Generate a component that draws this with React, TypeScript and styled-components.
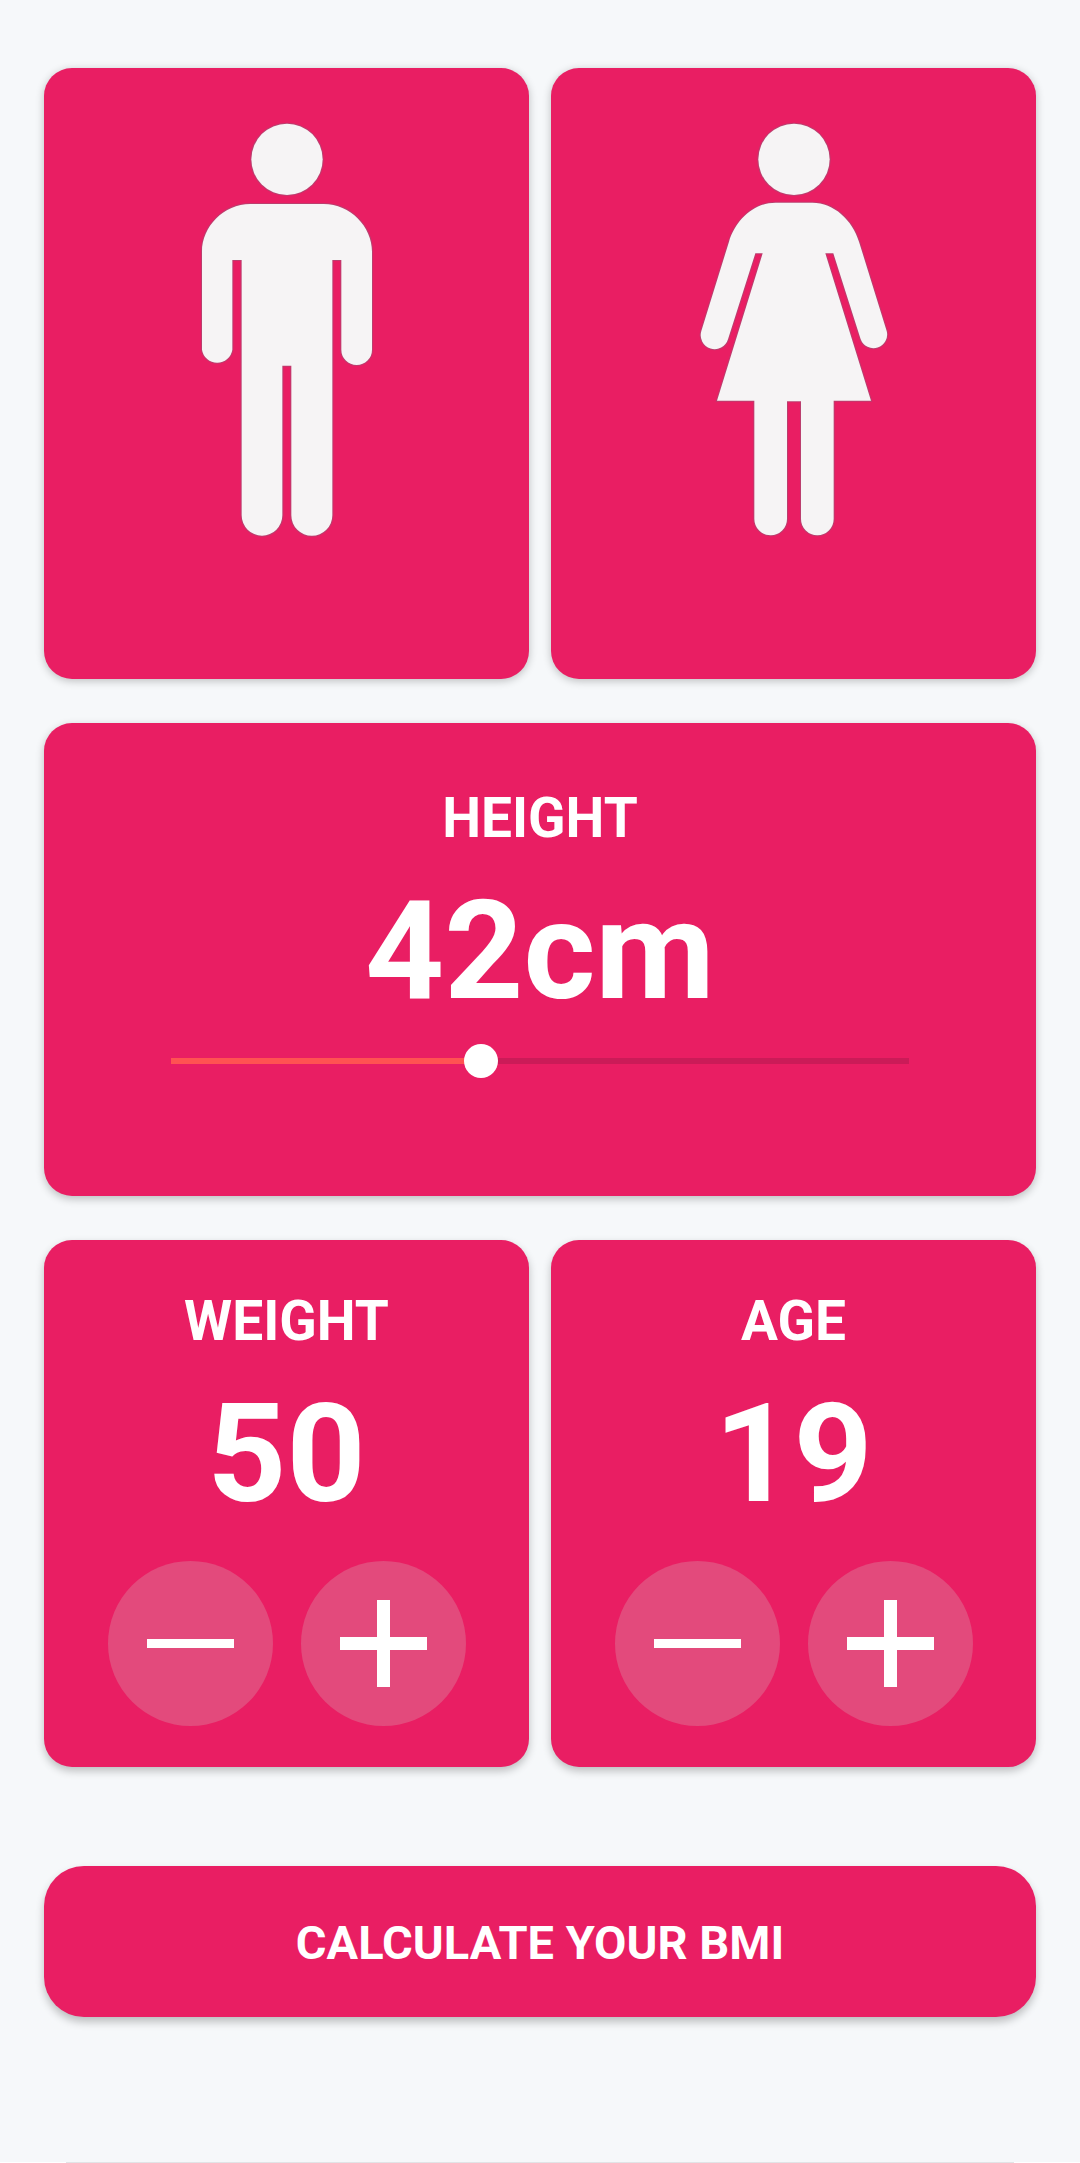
import React, { useState } from "react";
import styled, { createGlobalStyle, css } from "styled-components";

const PINK = "#e91e63";

const GlobalStyle = createGlobalStyle`
  *, *::before, *::after { box-sizing: border-box; }
  body {
    margin: 0;
    background: #f6f8fa;
    font-family: Roboto, "Liberation Sans", sans-serif;
    color: #fff;
  }
`;

const Page = styled.div`
  display: flex;
  flex-direction: column;
  justify-content: space-between;
  min-height: 100vh;
`;

const Form = styled.main`
  display: flex;
  flex-direction: column;
  gap: 44px;
  padding: 68px 44px 0;
`;

const Row = styled.div`
  display: grid;
  grid-template-columns: 1fr 1fr;
  gap: 22px;
`;

const surface = css<{ $depth?: number }>`
  background: ${PINK};
  border-radius: 28px;
  box-shadow: 0 ${(p) => p.$depth ?? 2}px 8px rgba(0, 0, 0, 0.24);
`;

const GenderCard = styled.button`
  ${surface}
  display: flex;
  justify-content: center;
  padding: 52px 0 139px;
  border: 0;
  cursor: pointer;
`;

const Figure = styled.svg`
  display: block;
  width: 200px;
  height: 420px;
  fill: #f6f4f5;
  stroke: rgba(150, 90, 120, 0.55);
  stroke-width: 6px;
  paint-order: stroke;
`;

const Card = styled.section<{ $depth?: number; $top: number; $bottom: number }>`
  ${surface}
  display: flex;
  flex-direction: column;
  align-items: center;
  padding: ${(p) => p.$top}px 0 ${(p) => p.$bottom}px;
`;

const Caption = styled.label`
  font-size: 55px;
  line-height: 64px;
  font-weight: 700;
`;

const Value = styled.output`
  margin-top: 20px;
  font-size: 138px;
  line-height: 162px;
  font-weight: 700;
`;

const thumb = css`
  width: 34px;
  height: 34px;
  border: 0;
  border-radius: 50%;
  background: #fff;
`;

const Slider = styled.input<{ $percent: number }>`
  appearance: none;
  width: calc(100% - 220px);
  height: 34px;
  margin: 12px 0 0;
  cursor: pointer;
  background: linear-gradient(
      to right,
      #ff5252 ${(p) => p.$percent}%,
      #cb1b58 ${(p) => p.$percent}%
    )
    center / calc(100% - 34px) 6px no-repeat;

  &::-webkit-slider-thumb {
    appearance: none;
    ${thumb}
  }
  &::-moz-range-thumb {
    ${thumb}
  }
`;

const Steps = styled.div`
  display: flex;
  gap: 28px;
  margin-top: 26px;
`;

const StepButton = styled.button`
  display: flex;
  align-items: center;
  justify-content: center;
  width: 165px;
  height: 165px;
  padding: 0;
  border: 0;
  border-radius: 50%;
  background: #e34a7c;
  cursor: pointer;
`;

const Sign = styled.svg`
  width: 87px;
  height: 87px;
  fill: #fff;
`;

const Submit = styled.button`
  ${surface}
  margin-top: 55px;
  padding: 49px 0 46px;
  border: 0;
  border-radius: 40px;
  color: #fff;
  font-family: inherit;
  font-size: 47px;
  line-height: 56px;
  font-weight: 700;
  cursor: pointer;
`;

const SheetEdge = styled.footer`
  height: 1px;
  border: solid #fff;
  border-width: 0 66px;
  background: #e2e4e6;
`;

function Man() {
  return (
    <Figure viewBox="20 60 600 1260" aria-hidden="true">
      <circle cx="320" cy="178" r="107" />
      <path d="M210 312H430C510 312 575 380 575 455V749A46 46 0 0 1 483 749V480H456V1246A61 61 0 0 1 333 1246V797H306V1246A61 61 0 0 1 184 1246V480H156V749A46 46 0 0 1 65 749V455C65 380 130 312 210 312Z" />
    </Figure>
  );
}

function Woman() {
  return (
    <Figure viewBox="40 60 600 1260" aria-hidden="true">
      <circle cx="340" cy="178" r="107" />
      <path d="M285 308H395C460 308 515 360 535 425L618 693A41 41 0 0 1 540 718L458 460H434L571 902H459V1257A49 49 0 0 1 361 1257V904H319V1257A49 49 0 0 1 221 1257V902H109L246 460H224L142 718A41 41 0 0 1 62 693L145 425C165 360 220 308 285 308Z" />
    </Figure>
  );
}

interface CounterProps {
  id: string;
  title: string;
  value: number;
  onChange: (next: number) => void;
}

function Counter({ id, title, value, onChange }: CounterProps) {
  return (
    <Card $depth={4} $top={49} $bottom={41}>
      <Caption htmlFor={id}>{title}</Caption>
      <Value id={id}>{value}</Value>
      <Steps>
        <StepButton
          type="button"
          aria-label={`Decrease ${title.toLowerCase()}`}
          onClick={() => onChange(Math.max(1, value - 1))}
        >
          <Sign viewBox="0 0 87 87" aria-hidden="true">
            <rect x="0" y="39" width="87" height="9" />
          </Sign>
        </StepButton>
        <StepButton
          type="button"
          aria-label={`Increase ${title.toLowerCase()}`}
          onClick={() => onChange(value + 1)}
        >
          <Sign viewBox="0 0 87 87" aria-hidden="true">
            <rect x="0" y="37" width="87" height="13" />
            <rect x="37" y="0" width="13" height="87" />
          </Sign>
        </StepButton>
      </Steps>
    </Card>
  );
}

export default function App() {
  const [gender, setGender] = useState<"male" | "female" | null>(null);
  const [height, setHeight] = useState(42);
  const [weight, setWeight] = useState(50);
  const [age, setAge] = useState(19);

  return (
    <Page>
      <GlobalStyle />
      <Form>
        <Row>
          <GenderCard
            type="button"
            aria-label="Male"
            aria-pressed={gender === "male"}
            onClick={() => setGender("male")}
          >
            <Man />
          </GenderCard>
          <GenderCard
            type="button"
            aria-label="Female"
            aria-pressed={gender === "female"}
            onClick={() => setGender("female")}
          >
            <Woman />
          </GenderCard>
        </Row>

        <Card $depth={3} $top={63} $bottom={118}>
          <Caption htmlFor="height">HEIGHT</Caption>
          <Value htmlFor="height">{height}cm</Value>
          <Slider
            id="height"
            type="range"
            min={0}
            max={100}
            value={height}
            $percent={height}
            onChange={(e) => setHeight(Number(e.target.value))}
          />
        </Card>

        <Row>
          <Counter id="weight" title="WEIGHT" value={weight} onChange={setWeight} />
          <Counter id="age" title="AGE" value={age} onChange={setAge} />
        </Row>

        <Submit type="button" $depth={5}>
          CALCULATE YOUR BMI
        </Submit>
      </Form>
      <SheetEdge />
    </Page>
  );
}
